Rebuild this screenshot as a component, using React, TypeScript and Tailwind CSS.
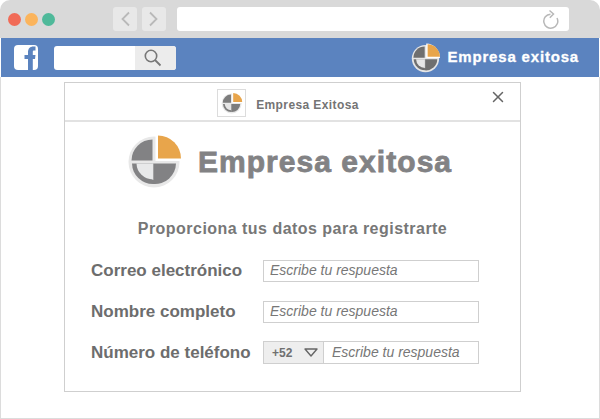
import { X } from 'lucide-react';

function Logo({ className, ring, dark, light }: { className: string; ring: string; dark: string; light: string }) {
    return (
        <svg viewBox="0 0 56 56" className={className}>
            <circle cx="27" cy="29" r="25.5" fill={ring} />
            <path d="M25.5 27.5V6.5A21 21 0 0 0 4.5 27.5Z" fill={dark} />
            <path d="M26 30.5V51A21 21 0 0 1 5 30.5Z" fill={dark} />
            <path d="M26 30.5V46.5A16.5 16.5 0 0 1 9.5 30.5Z" fill={light} />
            <path d="M26 30.5V51A21 21 0 0 0 49 30.5Z" fill={dark} />
            <path d="M26 30.5V47" stroke={light} strokeWidth="0.6" />
            <path d="M28.5 1A26 26 0 0 1 54 28H28.5Z" fill="#fff" />
            <path d="M31 25.5V2.5A23 23 0 0 1 54 25.5Z" fill="#e8a54b" />
        </svg>
    );
}

function FormRow({ label, children }: { label: string; children: React.ReactNode }) {
    return (
        <div className="flex items-center h-[23px]">
            <div className="w-[172px] text-[17px] leading-[23px] font-bold text-[#6d6d6d] whitespace-nowrap">{label}</div>
            {children}
        </div>
    );
}

function AnswerInput() {
    return (
        <div className="w-[216px] h-[22px] border border-[#cfcfcf] flex items-center pl-[6px] text-[14px] italic text-[#777]">
            Escribe tu respuesta
        </div>
    );
}

export default function App() {
    return (
        <div className="w-[600px] h-[419px] flex flex-col bg-white font-['Liberation_Sans',Arial,sans-serif] overflow-hidden">
            <div className="h-[38px] shrink-0 bg-[#d9d9d9] rounded-t-[10px] flex items-center pl-[8px] pr-[31px]">
                <div className="flex gap-[4px]">
                    <div className="w-[13px] h-[13px] rounded-full bg-[#f16b57]" />
                    <div className="w-[13px] h-[13px] rounded-full bg-[#fbb45c]" />
                    <div className="w-[13px] h-[13px] rounded-full bg-[#4fb99a]" />
                </div>
                <div className="flex gap-[5px] ml-[58px]">
                    <div className="w-[24px] h-[24px] rounded-[3px] bg-[#e8e8e8] flex items-center justify-center">
                        <svg viewBox="0 0 24 24" className="w-[24px] h-[24px]">
                            <path d="M16 5.5L9.5 12L16 18.5" fill="none" stroke="#b9b9b9" strokeWidth="1.8" />
                        </svg>
                    </div>
                    <div className="w-[24px] h-[24px] rounded-[3px] bg-[#e8e8e8] flex items-center justify-center">
                        <svg viewBox="0 0 24 24" className="w-[24px] h-[24px]">
                            <path d="M8 5.5L14.5 12L8 18.5" fill="none" stroke="#b9b9b9" strokeWidth="1.8" />
                        </svg>
                    </div>
                </div>
                <div className="flex-1 h-[24px] ml-[11px] bg-white rounded-[3px] flex items-center justify-end pr-[8px]">
                    <svg viewBox="0 0 20 20" className="w-[20px] h-[20px]">
                        <path d="M9.5 5.2A7 7 0 1 0 16 9" fill="none" stroke="#b8b8b8" strokeWidth="1.5" />
                        <path d="M8.5 1.5L12.5 5L8.8 8.8" fill="none" stroke="#b8b8b8" strokeWidth="1.5" />
                    </svg>
                </div>
            </div>

            <div className="h-[39px] shrink-0 mx-[1px] bg-[#5b83bf] flex items-center pl-[13px] pr-[20px]">
                <div className="w-[24px] h-[25px] bg-white rounded-[4px] overflow-hidden">
                    <svg viewBox="0 0 24 25" className="w-[24px] h-[25px]">
                        <path d="M14 25V14H10.5V10H14V7.5C14 3.5 16 1.5 19.5 1.5H21.5V5.5H20C19 5.5 18.8 6 18.8 7V10H21.5L21 14H18.8V25Z" fill="#5b83bf" />
                    </svg>
                </div>
                <div className="w-[122px] h-[24px] ml-[16px] rounded-[3px] bg-white overflow-hidden flex justify-end">
                    <div className="w-[41px] bg-[#ececec] flex items-center pl-[9px]">
                        <svg viewBox="0 0 18 18" className="w-[18px] h-[18px]">
                            <circle cx="7" cy="7" r="5.7" fill="none" stroke="#777" strokeWidth="1.6" />
                            <path d="M11 11L16.5 16.5" fill="none" stroke="#777" strokeWidth="1.8" />
                        </svg>
                    </div>
                </div>
                <div className="ml-auto flex items-center gap-[6px]">
                    <Logo className="w-[30px] h-[30px]" ring="#e6e6e6" dark="#6f6f6f" light="#e6e6e6" />
                    <span className="text-[15px] font-bold text-white tracking-[0.82px] [-webkit-text-stroke:0.3px_#fff]">Empresa exitosa</span>
                </div>
            </div>

            <div className="flex-1 border-x border-b border-[#dcdcdc] pt-[5px] pb-[26px] pl-[63px] pr-[78px]">
                <div className="relative h-[310px] border border-[#cfcfcf] flex flex-col">
                    <div className="h-[39px] shrink-0 border-b-2 border-[#e2e2e2] flex items-center justify-center gap-[10px] pr-[9px]">
                        <div className="w-[29px] h-[28px] mt-[2px] border border-[#dcdcdc] flex items-center justify-center">
                            <Logo className="w-[22px] h-[22px]" ring="#e8e8e8" dark="#7d7d7d" light="#e6e6e6" />
                        </div>
                        <span className="text-[12px] mt-[6px] font-bold text-[#747474] tracking-[0.4px]">Empresa Exitosa</span>
                    </div>
                    <X className="absolute top-[5px] right-[13px] w-[18px] h-[18px] text-[#666]" strokeWidth={2} />

                    <div className="flex items-center justify-center gap-[15px] mt-[11px] pr-[6px]">
                        <Logo className="w-[56px] h-[56px]" ring="#e8e8e8" dark="#828284" light="#e8e9ea" />
                        <span className="text-[30px] font-bold text-[#828284] tracking-[1.05px] [-webkit-text-stroke:0.8px_#828284]">Empresa exitosa</span>
                    </div>

                    <div className="mt-[28px] text-center text-[16px] font-bold text-[#777] tracking-[0.47px]">
                        Proporciona tus datos para registrarte
                    </div>

                    <div className="mt-[18px] pl-[26px] flex flex-col gap-[18px]">
                        <FormRow label="Correo electrónico">
                            <AnswerInput />
                        </FormRow>
                        <FormRow label="Nombre completo">
                            <AnswerInput />
                        </FormRow>
                        <FormRow label="Número de teléfono">
                            <div className="w-[216px] h-[23px] border border-[#cfcfcf] flex items-center text-[14px] italic text-[#777]">
                                <div className="w-[60px] h-full shrink-0 bg-[#eeeeee] border-r border-[#cfcfcf] flex items-center pl-[8px] gap-[12px]">
                                    <span className="text-[12px] font-bold not-italic text-[#707070]">+52</span>
                                    <svg viewBox="0 0 14 9" className="w-[14px] h-[9px]">
                                        <path d="M1 1H13L7 8Z" fill="none" stroke="#666" strokeWidth="1.4" strokeLinejoin="round" />
                                    </svg>
                                </div>
                                <span className="pl-[8px]">Escribe tu respuesta</span>
                            </div>
                        </FormRow>
                    </div>
                </div>
            </div>
        </div>
    );
}
